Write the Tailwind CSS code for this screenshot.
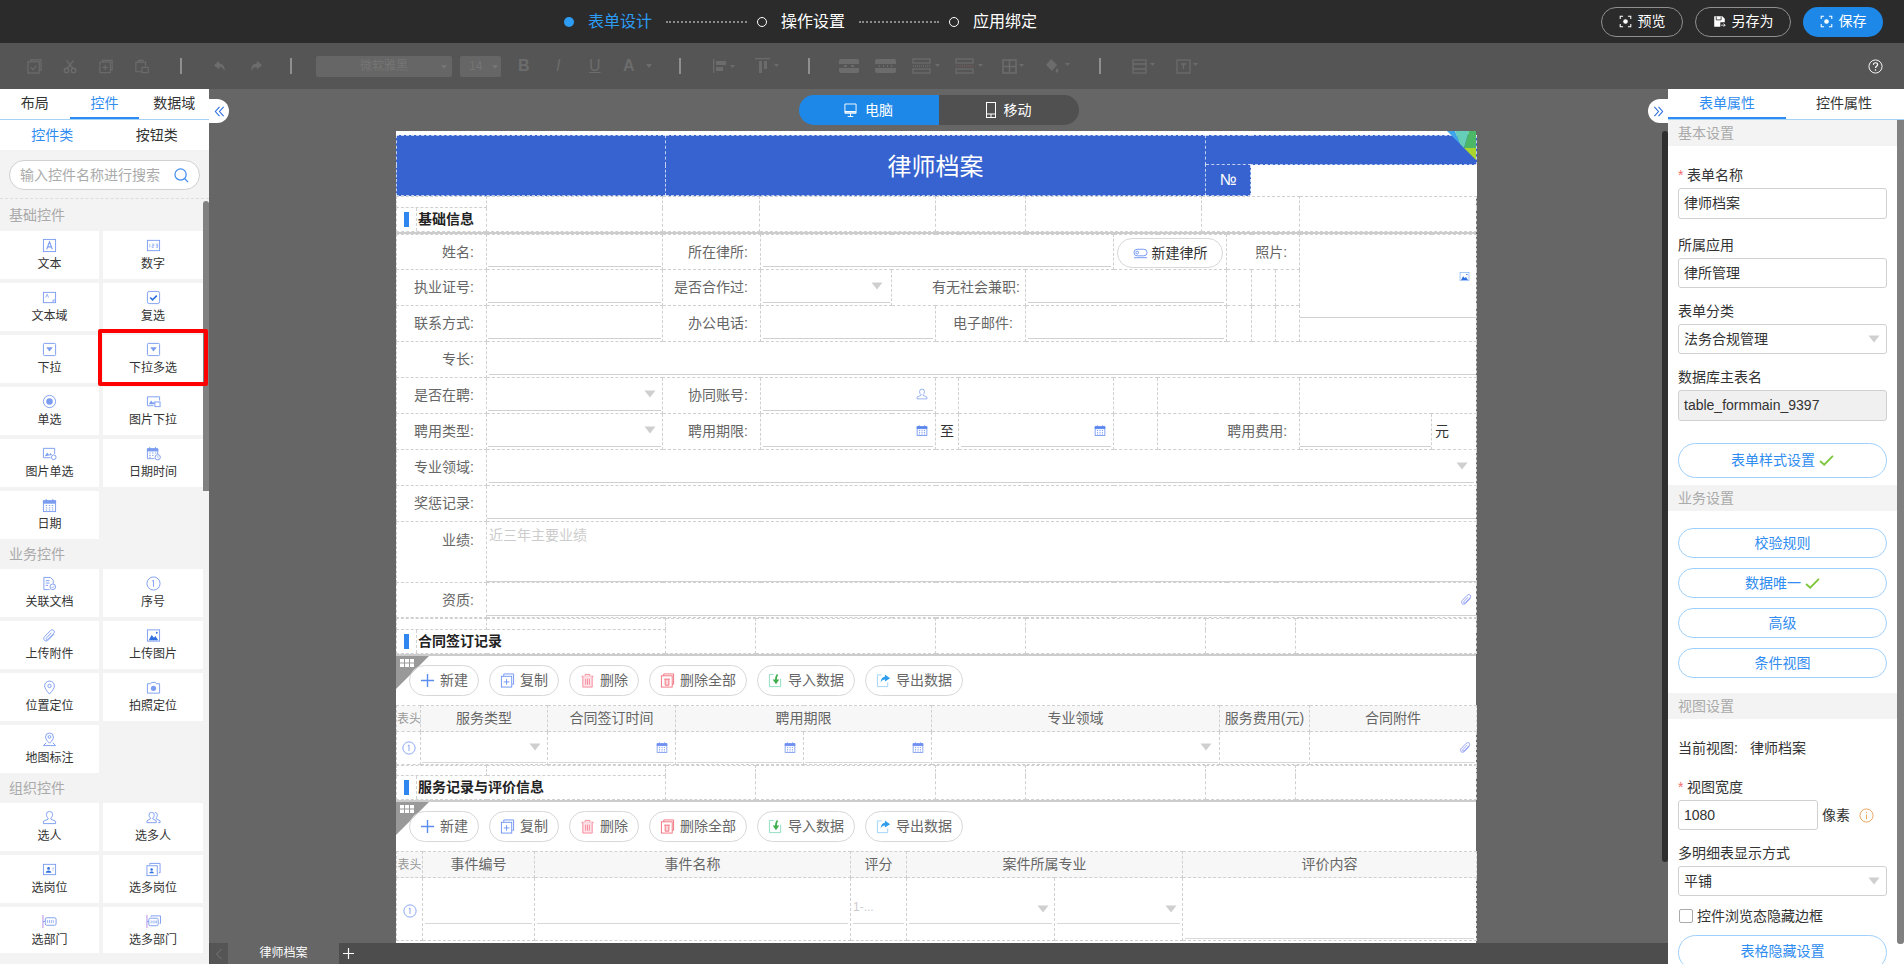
<!DOCTYPE html>
<html lang="zh-CN">
<head>
  <meta charset="UTF-8" />
  <title>律师档案 - 表单设计</title>
  <script src="https://cdn.jsdelivr.net/npm/@tailwindcss/browser@4"></script>
</head>
<body class="w-[1904px] h-[964px] overflow-hidden bg-[#666666] font-['Liberation_Sans','Noto_Sans_CJK_SC',sans-serif] text-[14px] text-[#333333]">

  <!-- icon sprite -->
  <svg class="hidden" xmlns="http://www.w3.org/2000/svg">
    <symbol id="i-text" viewBox="0 0 16 16"><rect x="1.5" y="1.5" width="13" height="13" fill="none" stroke="currentColor"/><path d="M5 12 8 4l3 8M6 9.5h4" fill="none" stroke="currentColor" stroke-width="1.2"/></symbol>
    <symbol id="i-num" viewBox="0 0 16 16"><rect x="1.5" y="2.5" width="13" height="11" fill="none" stroke="currentColor"/><path d="M4 6.5v3.5M6.5 6.5h2v1.7h-2V10h2M10.5 6.5h2v3.5h-2M10.5 8.2h2" fill="none" stroke="currentColor" stroke-width=".7"/></symbol>
    <symbol id="i-area" viewBox="0 0 16 16"><rect x="1.5" y="2.5" width="13" height="11" fill="none" stroke="currentColor"/><path d="M4 8l1.5-3.5L7 8M11 12l2-2v2z" fill="none" stroke="currentColor" stroke-width=".8"/></symbol>
    <symbol id="i-check" viewBox="0 0 16 16"><rect x="1.5" y="1.5" width="13" height="13" rx="2" fill="none" stroke="currentColor"/><path d="M4.5 8l2.5 2.5 4.500-4.500" fill="none" stroke="#2f6fe0" stroke-width="1.800"/></symbol>
    <symbol id="i-drop" viewBox="0 0 16 16"><rect x="1.5" y="1.5" width="13" height="13" rx="1" fill="none" stroke="currentColor"/><path d="M4.500 5.500h7L8 10z" fill="currentColor"/></symbol>
    <symbol id="i-radio" viewBox="0 0 16 16"><circle cx="8" cy="8" r="6.500" fill="none" stroke="currentColor"/><circle cx="8" cy="8" r="3.500" fill="currentColor"/></symbol>
    <symbol id="i-imgdrop" viewBox="0 0 16 16"><path d="M11 3H1.500v9.500H8" fill="none" stroke="currentColor"/><path d="M3 11l2.500-4 2 2.500 1.500-2v3.500z" fill="currentColor"/><rect x="9.500" y="8.500" width="5.500" height="5" fill="none" stroke="currentColor"/><path d="M10.500 3H14.500v4" fill="none" stroke="currentColor"/></symbol>
    <symbol id="i-imgradio" viewBox="0 0 16 16"><path d="M9 12.500H1.500v-10h12v6" fill="none" stroke="currentColor"/><path d="M3 11l2.500-4 2 2.500 1.500-2 1.500 2z" fill="currentColor"/><circle cx="12.500" cy="12" r="2.500" fill="none" stroke="currentColor"/></symbol>
    <symbol id="i-date" viewBox="0 0 16 16"><rect x="1.500" y="3" width="13" height="11.500" fill="none" stroke="currentColor"/><path d="M1.500 3h13v2.500h-13zM4.500 1v3M11.500 1v3" fill="currentColor" stroke="currentColor"/><path d="M4 8h1.500M7.300 8h1.500M10.500 8H12M4 10.500h1.500M7.300 10.500h1.500M10.500 10.500H12M4 12.800h1.500M7.300 12.800h1.500M10.500 12.800H12" stroke="currentColor"/></symbol>
    <symbol id="i-datetime" viewBox="0 0 16 16"><path d="M9 13.500H1.500V3h11v6" fill="none" stroke="currentColor"/><path d="M1.500 3h11v2.300h-11zM4 1v3M10 1v3" fill="currentColor" stroke="currentColor"/><path d="M3.500 7.500h1.500M6.500 7.500H8M9.500 7.500H11M3.500 10h1.500M6.500 10H8M3.500 12h1.500" stroke="currentColor"/><circle cx="12.500" cy="12" r="2.800" fill="#fff" stroke="currentColor"/><path d="M12.500 10.500V12l1 .8" fill="none" stroke="currentColor" stroke-width=".7"/></symbol>
    <symbol id="i-doc" viewBox="0 0 16 16"><path d="M8 14.500H2V1.500h7l3 3v3.500" fill="none" stroke="currentColor"/><path d="M4 5h4M4 7.500h4M4 10h2.500" stroke="currentColor"/><circle cx="11.500" cy="11.500" r="3" fill="none" stroke="currentColor"/><path d="M10 11.500l1.200 1.200 2-2" fill="none" stroke="currentColor" stroke-width=".8"/></symbol>
    <symbol id="i-seq" viewBox="0 0 16 16"><circle cx="8" cy="8" r="7" fill="none" stroke="currentColor"/><path d="M6.500 5.500 8 4.500V11.500" fill="none" stroke="currentColor"/></symbol>
    <symbol id="i-clip" viewBox="0 0 16 16"><path d="M12.800 6.500 7 12.600c-1.500 1.500-3.700 1.500-4.500.5-.9-1-.8-2.700.4-4l6-6.300c1-1 2.500-1.200 3.500-.3 1 .9.9 2.400 0 3.400l-5.800 6.100c-.6.600-1.400.6-1.800.2-.5-.5-.4-1.200.2-1.800l5-5.300" fill="none" stroke="currentColor"/></symbol>
    <symbol id="i-image" viewBox="0 0 16 16"><rect x="1.500" y="2" width="13" height="12" fill="none" stroke="currentColor"/><path d="M3 13l3-5.500 2.500 3 1.500-2 3 4.500z" fill="#2f6fe0"/><circle cx="11.500" cy="5" r="1" fill="#2f6fe0"/></symbol>
    <symbol id="i-pin" viewBox="0 0 16 16"><path d="M8 15C5 11.500 2.800 9 2.800 6.300a5.200 5.200 0 0 1 10.400 0C13.200 9 11 11.500 8 15z" fill="none" stroke="currentColor"/><circle cx="8" cy="6.300" r="1.800" fill="none" stroke="currentColor"/></symbol>
    <symbol id="i-camera" viewBox="0 0 16 16"><path d="M1.500 4h3.500l1-1.500h4L11 4h3.500v10h-13z" fill="none" stroke="currentColor"/><circle cx="8" cy="8.800" r="2.800" fill="currentColor"/></symbol>
    <symbol id="i-mappin" viewBox="0 0 16 16"><path d="M8 12C5.500 9.500 3.800 7.500 3.800 5.300a4.200 4.200 0 0 1 8.400 0C12.200 7.500 10.500 9.500 8 12z" fill="none" stroke="currentColor"/><circle cx="8" cy="5.300" r="1.500" fill="none" stroke="currentColor"/><path d="M4.500 11.500 1.500 14.500h13l-3-3" fill="none" stroke="currentColor"/></symbol>
    <symbol id="i-user" viewBox="0 0 16 16"><path d="M8 1.500a3.300 3.300 0 0 1 3.300 3.500c0 1.500-.8 2.900-1.800 3.500v1.300L14.500 12v2.500h-13V12l5-2.200V8.500C5.500 7.900 4.700 6.500 4.700 5A3.300 3.300 0 0 1 8 1.500z" fill="none" stroke="currentColor"/></symbol>
    <symbol id="i-users" viewBox="0 0 16 16"><path d="M6 2.500a2.800 2.800 0 0 1 2.800 3c0 1.300-.7 2.400-1.500 3v1l3.700 2v2H1v-2l3.700-2v-1C3.900 7.900 3.200 6.800 3.200 5.500A2.800 2.800 0 0 1 6 2.500zM9.500 2.500c1.500 0 2.600 1.300 2.600 3 0 1.200-.6 2.300-1.300 2.800v1l4.200 2.200v2H13" fill="none" stroke="currentColor"/></symbol>
    <symbol id="i-post" viewBox="0 0 16 16"><rect x="1.500" y="2.500" width="13" height="11" fill="none" stroke="currentColor"/><circle cx="7" cy="6.800" r="1.500" fill="#2f6fe0"/><path d="M4 11.500c.4-1.800 1.500-2.500 3-2.500s2.600.7 3 2.500z" fill="#2f6fe0"/><path d="M11 6.500h2M11 8.500h1.500" stroke="currentColor" stroke-width=".7"/></symbol>
    <symbol id="i-posts" viewBox="0 0 16 16"><rect x="1" y="4" width="11" height="10.500" fill="none" stroke="currentColor"/><path d="M4 3V1.500h11V11.500h-1.500" fill="none" stroke="currentColor"/><circle cx="6" cy="8" r="1.300" fill="#2f6fe0"/><path d="M3.500 12c.4-1.500 1.300-2 2.500-2s2.100.5 2.500 2z" fill="#2f6fe0"/></symbol>
    <symbol id="i-dept" viewBox="0 0 16 16"><path d="M1 1v14" stroke="#b08ae8"/><path d="M1 8h2" stroke="currentColor"/><rect x="3.500" y="4" width="11.500" height="8" rx="1.500" fill="none" stroke="currentColor"/><path d="M6 6.500v3M8 6.500v3M10 6.500v3M12 6.500v3" stroke="currentColor" stroke-width=".8"/></symbol>
    <symbol id="i-depts" viewBox="0 0 16 16"><path d="M1 1v14" stroke="#b08ae8"/><path d="M1 8h2" stroke="currentColor"/><rect x="3" y="4.500" width="10" height="8" rx="1.500" fill="none" stroke="currentColor"/><path d="M5.500 3V2h10v8h-1" fill="none" stroke="currentColor"/><path d="M5.500 7v3M7.500 7v3M9.500 7v3M11 7v3" stroke="currentColor" stroke-width=".8"/></symbol>
    <symbol id="i-arrow" viewBox="0 0 12 8"><path d="M.5.500h11L6 7.500z" fill="#cfcfcf"/></symbol>
    <symbol id="i-ok" viewBox="0 0 16 12"><path d="M1 6.500 5.500 10.500 15 1" fill="none" stroke="#7cc63b" stroke-width="2"/></symbol>
    <symbol id="i-plus" viewBox="0 0 16 16"><path d="M8 1v14M1 8h14" stroke="#5b8def" stroke-width="1.500"/></symbol>
    <symbol id="i-copy" viewBox="0 0 16 16"><rect x="1.500" y="3.500" width="11" height="11.500" fill="none" stroke="#6f94f3"/><path d="M4 3V1h10.500v11H13" fill="none" stroke="#6f94f3"/><path d="M7 6.500v6M4 9.500h6" stroke="#6f94f3"/></symbol>
    <symbol id="i-trash" viewBox="0 0 16 16"><path d="M1.500 3.500h13M5.500 3V1.500h5V3" fill="none" stroke="#f58a9b"/><path d="M3 3.500V15h10V3.500" fill="#fde3e7" stroke="#f58a9b"/><path d="M6 6v6.500M8 6v6.500M10 6v6.500" stroke="#f58a9b"/></symbol>
    <symbol id="i-trashall" viewBox="0 0 16 16"><rect x="1.500" y="3" width="11.500" height="12" fill="#fff" stroke="#f2727f"/><path d="M4 3V1h10.500v11H13" fill="none" stroke="#f2727f"/><path d="M4.500 6.500h6M5.500 6.500V13h4V6.500" fill="#fbd5da" stroke="#f2727f"/></symbol>
    <symbol id="i-import" viewBox="0 0 16 16"><path d="M6 1.500H1.500v13h12V6" fill="none" stroke="#8edcc0"/><path d="M9.500 1C8 3 7.500 5 7.500 7H5l3.500 5L12 7H9.500c0-2 .5-4 1.500-5z" fill="#3fae4f"/></symbol>
    <symbol id="i-export" viewBox="0 0 16 16"><path d="M6 2H1.500v12.500h11V10" fill="none" stroke="#9fd2f8"/><path d="M9.500 1.500 15 5.500 9.500 9V7C7.500 7 6 8 5 10c0-3.500 1.800-5.700 4.500-6z" fill="#2d9df0"/></symbol>
    <symbol id="i-preview" viewBox="0 0 16 16"><path d="M1.500 5V1.500H5M11 1.500h3.500V5M14.500 11v3.500H11M5 14.500H1.500V11" fill="none" stroke="currentColor" stroke-width="1.300"/><circle cx="8" cy="8" r="2.800" fill="currentColor"/></symbol>
  </svg>

  <!-- top bar -->
  <header class="h-[43px] bg-[#2b2b2b] flex items-center pl-[564px] pr-[21px]">
    <span class="w-[10px] h-[10px] rounded-full bg-[#2d9cf4]"></span>
    <span class="ml-[14px] text-[16px] text-[#2d9cf4]">表单设计</span>
    <span class="ml-[14px] w-[81px] border-t-2 border-dotted border-[#8a8a8a]"></span>
    <span class="ml-[10px] w-[10px] h-[10px] rounded-full border border-white"></span>
    <span class="ml-[14px] text-[16px] text-white">操作设置</span>
    <span class="ml-[14px] w-[80px] border-t-2 border-dotted border-[#8a8a8a]"></span>
    <span class="ml-[10px] w-[10px] h-[10px] rounded-full border border-white"></span>
    <span class="ml-[14px] text-[16px] text-white">应用绑定</span>
    <div class="ml-auto flex gap-[12px]">
      <button class="w-[82px] h-[30px] rounded-full border border-[#8f8f8f] flex items-center justify-center gap-[6px] text-white">
        <svg class="w-[13px] h-[13px]"><use href="#i-preview"/></svg>预览
      </button>
      <button class="w-[96px] h-[30px] rounded-full border border-[#8f8f8f] flex items-center justify-center gap-[6px] text-white">
        <svg class="w-[13px] h-[13px]" viewBox="0 0 16 16"><path d="M1.500 1.500h10l3 3V9H9v5.500H1.500z" fill="#fff"/><path d="M4 2v4h6V2" fill="none" stroke="#2b2b2b"/><path d="M10 12.500h5M13 10.500l2 2-2 2" fill="none" stroke="#fff"/></svg>另存为
      </button>
      <button class="w-[80px] h-[30px] rounded-full bg-[#1e88e8] flex items-center justify-center gap-[6px] text-white">
        <svg class="w-[13px] h-[13px]"><use href="#i-preview"/></svg>保存
      </button>
    </div>
  </header>

  <!-- toolbar, everything greyed out -->
  <div class="h-[46px] bg-[#555555] flex items-center text-[#6c6c6c]">
    <svg class="ml-[27px] w-[15px] h-[15px] shrink-0" viewBox="0 0 16 16" fill="none" stroke="currentColor" stroke-width="1.300"><rect x="1" y="3" width="12" height="12"/><path d="M4 3V1h11v11h-2M4 9l2.500 2.500L10 7"/></svg>
    <svg class="ml-[21px] w-[14px] h-[15px] shrink-0" viewBox="0 0 16 16" fill="none" stroke="currentColor" stroke-width="1.500"><circle cx="4" cy="12.500" r="2.500"/><circle cx="12" cy="12.500" r="2.500"/><path d="M5 10 12 1M11 10 4 1"/></svg>
    <svg class="ml-[22px] w-[14px] h-[15px] shrink-0" viewBox="0 0 16 16" fill="none" stroke="currentColor" stroke-width="1.300"><rect x="1" y="3" width="12" height="12"/><path d="M4 3V1h11v11h-2M7 6v6M4 9h6"/></svg>
    <svg class="ml-[22px] w-[14px] h-[15px] shrink-0" viewBox="0 0 16 16" fill="none" stroke="currentColor" stroke-width="1.300"><path d="M7 14H1V3h11v5"/><path d="M4 3V1h5v2"/><rect x="8" y="9" width="7" height="6"/></svg>
    <span class="ml-[31px] w-[2px] h-[16px] bg-[#8f8f8f] shrink-0"></span>
    <svg class="ml-[31px] w-[14px] h-[14px] shrink-0" viewBox="0 0 16 16" fill="currentColor"><path d="M7 2 1 7l6 5V9c3 0 5 1 6 5 1-5-1-8.500-6-9z"/></svg>
    <svg class="ml-[22px] w-[14px] h-[14px] shrink-0" viewBox="0 0 16 16" fill="currentColor"><path d="M9 2l6 5-6 5V9c-3 0-5 1-6 5-1-5 1-8.500 6-9z"/></svg>
    <span class="ml-[27px] w-[2px] h-[16px] bg-[#8f8f8f] shrink-0"></span>
    <div class="ml-[24px] w-[136px] h-[21px] bg-[#666666] rounded-[2px] relative shrink-0 flex items-center justify-center text-[12px] text-[#757575]">微软雅黑<span class="absolute right-[5px] top-[9px] border-x-[3px] border-t-[4px] border-x-transparent border-t-[#757575]"></span></div>
    <div class="ml-[8px] w-[41px] h-[21px] bg-[#666666] rounded-[2px] relative shrink-0 flex items-center pl-[9px] text-[12px] text-[#757575]">14<span class="absolute right-[3px] top-[9px] border-x-[3px] border-t-[4px] border-x-transparent border-t-[#757575]"></span></div>
    <span class="ml-[17px] w-[12px] text-[16px] font-bold leading-none shrink-0">B</span>
    <span class="ml-[26px] w-[9px] text-[16px] italic leading-none shrink-0">I</span>
    <span class="ml-[24px] w-[14px] text-[16px] underline leading-none shrink-0">U</span>
    <span class="ml-[20px] w-[13px] text-[16px] font-bold leading-none shrink-0">A</span>
    <span class="ml-[10px] border-x-[3px] border-t-[4px] border-x-transparent border-t-[#6c6c6c] shrink-0"></span>
    <span class="ml-[27px] w-[2px] h-[16px] bg-[#8f8f8f] shrink-0"></span>
    <svg class="ml-[31px] w-[23px] h-[14px] shrink-0" viewBox="0 0 23 14" fill="currentColor"><path d="M1 0h1.300v14H1zM4 2h10v4H4zM4 8h7v4H4zM18 6h5l-2.500 3z"/></svg>
    <svg class="ml-[20px] w-[24px] h-[16px] shrink-0" viewBox="0 0 24 16" fill="currentColor"><path d="M0 0h15v1.300H0zM4 3h3v12H4zM9 3h3v8H9zM19 6h5l-2.500 3z"/></svg>
    <span class="ml-[29px] w-[2px] h-[16px] bg-[#8f8f8f] shrink-0"></span>
    <svg class="ml-[29px] w-[20px] h-[14px] shrink-0" viewBox="0 0 20 14" fill="currentColor"><path d="M0 2a2 2 0 0 1 2-2h16a2 2 0 0 1 2 2v3H0zM0 9h20v3a2 2 0 0 1-2 2H2a2 2 0 0 1-2-2zM5 6h3v2H5zM12 6h3v2h-3z"/></svg>
    <svg class="ml-[16px] w-[21px] h-[14px] shrink-0" viewBox="0 0 21 14" fill="currentColor"><path d="M0 2a2 2 0 0 1 2-2h17a2 2 0 0 1 2 2v3H0zM0 9h21v3a2 2 0 0 1-2 2H2a2 2 0 0 1-2-2zM4 6h1v2H4zM8 6h1v2H8zM12 6h1v2h-1zM16 6h1v2h-1z"/></svg>
    <svg class="ml-[16px] w-[29px] h-[16px] shrink-0" viewBox="0 0 29 16" fill="none" stroke="currentColor" stroke-width="1.300"><rect x="1" y="1" width="17" height="4"/><rect x="1" y="11" width="17" height="4"/><path d="M1 8h17" stroke-dasharray="1 1"/><path d="M23 6h5l-2.500 3z" fill="currentColor" stroke="none"/></svg>
    <svg class="ml-[14px] w-[29px] h-[16px] shrink-0" viewBox="0 0 29 16" fill="none" stroke="currentColor" stroke-width="1.300"><rect x="1" y="1" width="17" height="4"/><rect x="1" y="11" width="17" height="4"/><path d="M1 8h17" stroke="#7a5a5a" stroke-dasharray="1 1"/><path d="M23 6h5l-2.500 3z" fill="currentColor" stroke="none"/></svg>
    <svg class="ml-[18px] w-[22px] h-[15px] shrink-0" viewBox="0 0 22 15" fill="none" stroke="currentColor" stroke-width="1.500"><rect x="1" y="1" width="13" height="13"/><path d="M7.500 1v13M1 7.500h13"/><path d="M17 5h5l-2.500 3z" fill="currentColor" stroke="none"/></svg>
    <svg class="ml-[21px] w-[26px] h-[16px] shrink-0" viewBox="0 0 26 16" fill="currentColor"><path d="M6 1l6 6-5 6-6-6z"/><path d="M12 10c1 1.500 1.500 2.300 1.500 3a1.500 1.500 0 0 1-3 0c0-.7.5-1.500 1.500-3zM20 5h5l-2.500 3z"/></svg>
    <span class="ml-[28px] w-[2px] h-[16px] bg-[#8f8f8f] shrink-0"></span>
    <svg class="ml-[31px] w-[23px] h-[15px] shrink-0" viewBox="0 0 23 15" fill="none" stroke="currentColor" stroke-width="1.300"><rect x="1" y="1" width="13" height="13"/><path d="M1 5h13M1 10h13"/><path d="M18 4h5l-2.500 3z" fill="currentColor" stroke="none"/></svg>
    <svg class="ml-[21px] w-[22px] h-[15px] shrink-0" viewBox="0 0 22 15" fill="none" stroke="currentColor" stroke-width="1.300"><rect x="1" y="1" width="13" height="13"/><path d="M5 5h5M7.500 5v5"/><path d="M17 4h5l-2.500 3z" fill="currentColor" stroke="none"/></svg>
    <svg class="ml-auto mr-[21px] w-[15px] h-[15px] shrink-0 text-white" viewBox="0 0 16 16" fill="none" stroke="currentColor"><circle cx="8" cy="8" r="7"/><path d="M5.800 6.200C5.800 4.800 6.800 4 8 4s2.200.8 2.200 2c0 1.700-2.200 1.700-2.200 3.500" stroke-width="1.300"/><path d="M8 11v1.500" stroke-width="1.300"/></svg>
  </div>

  <div class="flex h-[875px]">
    <!-- left: control palette -->
    <aside class="w-[209px] shrink-0 bg-[#f3f3f3] relative overflow-hidden">
      <div class="h-[31px] bg-white grid grid-cols-3 border-b border-[#a5d3f8] text-center leading-[28px]">
        <span>布局</span>
        <span class="text-[#2f8cf0] border-b-2 border-[#2f8cf0] h-[30px]">控件</span>
        <span>数据域</span>
      </div>
      <div class="h-[30px] bg-white grid grid-cols-2 text-center leading-[30px]">
        <span class="text-[#2f8cf0]">控件类</span>
        <span>按钮类</span>
      </div>
      <div class="h-[49px] border-b border-dashed border-[#dddddd] px-[9px] pt-[10px]">
        <div class="h-[30px] bg-white rounded-full border border-[#d0d0d0] flex items-center pl-[10px] pr-[10px] justify-between text-[#aaaaaa]">
          <span>输入控件名称进行搜索</span>
          <svg class="w-[15px] h-[15px]" viewBox="0 0 16 16" fill="none" stroke="#3f8cf0" stroke-width="1.300"><circle cx="7" cy="7" r="6"/><path d="M11.500 11.500 15 15"/></svg>
        </div>
      </div>

      <div class="h-[32px] pl-[9px] pt-[1px] flex items-center text-[#aaaaaa]">基础控件</div>
      <div class="grid grid-cols-[99px_100px] gap-[4px] text-[12px] text-center text-[#333333]">
        <div class="h-[48px] bg-white pt-[7px] flex flex-col items-center text-[#7b9cf0]"><svg class="w-[15px] h-[15px]"><use href="#i-text"/></svg><span class="mt-[2px] leading-[18px] text-[#333333]">文本</span></div>
        <div class="h-[48px] bg-white pt-[7px] flex flex-col items-center text-[#7b9cf0]"><svg class="w-[15px] h-[15px]"><use href="#i-num"/></svg><span class="mt-[2px] leading-[18px] text-[#333333]">数字</span></div>
        <div class="h-[48px] bg-white pt-[7px] flex flex-col items-center text-[#7b9cf0]"><svg class="w-[15px] h-[15px]"><use href="#i-area"/></svg><span class="mt-[2px] leading-[18px] text-[#333333]">文本域</span></div>
        <div class="h-[48px] bg-white pt-[7px] flex flex-col items-center text-[#7b9cf0]"><svg class="w-[15px] h-[15px]"><use href="#i-check"/></svg><span class="mt-[2px] leading-[18px] text-[#333333]">复选</span></div>
        <div class="h-[48px] bg-white pt-[7px] flex flex-col items-center text-[#7b9cf0]"><svg class="w-[15px] h-[15px]"><use href="#i-drop"/></svg><span class="mt-[2px] leading-[18px] text-[#333333]">下拉</span></div>
        <div class="h-[48px] bg-white pt-[7px] flex flex-col items-center text-[#7b9cf0] relative">
          <svg class="w-[15px] h-[15px]"><use href="#i-drop"/></svg><span class="mt-[2px] leading-[18px] text-[#333333]">下拉多选</span>
          <span class="absolute z-10 left-[-5px] top-[-6px] w-[110px] h-[57px] border-[4px] border-[#ff0000] rounded-[2px]"></span>
        </div>
        <div class="h-[48px] bg-white pt-[7px] flex flex-col items-center text-[#7b9cf0]"><svg class="w-[15px] h-[15px]"><use href="#i-radio"/></svg><span class="mt-[2px] leading-[18px] text-[#333333]">单选</span></div>
        <div class="h-[48px] bg-white pt-[7px] flex flex-col items-center text-[#7b9cf0]"><svg class="w-[15px] h-[15px]"><use href="#i-imgdrop"/></svg><span class="mt-[2px] leading-[18px] text-[#333333]">图片下拉</span></div>
        <div class="h-[48px] bg-white pt-[7px] flex flex-col items-center text-[#7b9cf0]"><svg class="w-[15px] h-[15px]"><use href="#i-imgradio"/></svg><span class="mt-[2px] leading-[18px] text-[#333333]">图片单选</span></div>
        <div class="h-[48px] bg-white pt-[7px] flex flex-col items-center text-[#7b9cf0]"><svg class="w-[15px] h-[15px]"><use href="#i-datetime"/></svg><span class="mt-[2px] leading-[18px] text-[#333333]">日期时间</span></div>
        <div class="h-[48px] bg-white pt-[7px] flex flex-col items-center text-[#7b9cf0]"><svg class="w-[15px] h-[15px]"><use href="#i-date"/></svg><span class="mt-[2px] leading-[18px] text-[#333333]">日期</span></div>
      </div>

      <div class="h-[30px] pl-[9px] flex items-center text-[#aaaaaa]">业务控件</div>
      <div class="grid grid-cols-[99px_100px] gap-[4px] text-[12px] text-center">
        <div class="h-[48px] bg-white pt-[7px] flex flex-col items-center text-[#7b9cf0]"><svg class="w-[15px] h-[15px]"><use href="#i-doc"/></svg><span class="mt-[2px] leading-[18px] text-[#333333]">关联文档</span></div>
        <div class="h-[48px] bg-white pt-[7px] flex flex-col items-center text-[#7b9cf0]"><svg class="w-[15px] h-[15px]"><use href="#i-seq"/></svg><span class="mt-[2px] leading-[18px] text-[#333333]">序号</span></div>
        <div class="h-[48px] bg-white pt-[7px] flex flex-col items-center text-[#7b9cf0]"><svg class="w-[15px] h-[15px]"><use href="#i-clip"/></svg><span class="mt-[2px] leading-[18px] text-[#333333]">上传附件</span></div>
        <div class="h-[48px] bg-white pt-[7px] flex flex-col items-center text-[#7b9cf0]"><svg class="w-[15px] h-[15px]"><use href="#i-image"/></svg><span class="mt-[2px] leading-[18px] text-[#333333]">上传图片</span></div>
        <div class="h-[48px] bg-white pt-[7px] flex flex-col items-center text-[#7b9cf0]"><svg class="w-[15px] h-[15px]"><use href="#i-pin"/></svg><span class="mt-[2px] leading-[18px] text-[#333333]">位置定位</span></div>
        <div class="h-[48px] bg-white pt-[7px] flex flex-col items-center text-[#7b9cf0]"><svg class="w-[15px] h-[15px]"><use href="#i-camera"/></svg><span class="mt-[2px] leading-[18px] text-[#333333]">拍照定位</span></div>
        <div class="h-[48px] bg-white pt-[7px] flex flex-col items-center text-[#7b9cf0]"><svg class="w-[15px] h-[15px]"><use href="#i-mappin"/></svg><span class="mt-[2px] leading-[18px] text-[#333333]">地图标注</span></div>
      </div>

      <div class="h-[30px] pl-[9px] flex items-center text-[#aaaaaa]">组织控件</div>
      <div class="grid grid-cols-[99px_100px] gap-[4px] text-[12px] text-center">
        <div class="h-[48px] bg-white pt-[7px] flex flex-col items-center text-[#7b9cf0]"><svg class="w-[15px] h-[15px]"><use href="#i-user"/></svg><span class="mt-[2px] leading-[18px] text-[#333333]">选人</span></div>
        <div class="h-[48px] bg-white pt-[7px] flex flex-col items-center text-[#7b9cf0]"><svg class="w-[15px] h-[15px]"><use href="#i-users"/></svg><span class="mt-[2px] leading-[18px] text-[#333333]">选多人</span></div>
        <div class="h-[48px] bg-white pt-[7px] flex flex-col items-center text-[#7b9cf0]"><svg class="w-[15px] h-[15px]"><use href="#i-post"/></svg><span class="mt-[2px] leading-[18px] text-[#333333]">选岗位</span></div>
        <div class="h-[48px] bg-white pt-[7px] flex flex-col items-center text-[#7b9cf0]"><svg class="w-[15px] h-[15px]"><use href="#i-posts"/></svg><span class="mt-[2px] leading-[18px] text-[#333333]">选多岗位</span></div>
        <div class="h-[46px] bg-white pt-[7px] flex flex-col items-center text-[#7b9cf0]"><svg class="w-[15px] h-[15px]"><use href="#i-dept"/></svg><span class="mt-[2px] leading-[18px] text-[#333333]">选部门</span></div>
        <div class="h-[46px] bg-white pt-[7px] flex flex-col items-center text-[#7b9cf0]"><svg class="w-[15px] h-[15px]"><use href="#i-depts"/></svg><span class="mt-[2px] leading-[18px] text-[#333333]">选多部门</span></div>
      </div>
      <!-- scrollbar thumb -->
      <span class="absolute left-[203px] top-[112px] w-[6px] h-[290px] bg-[#808080] rounded-t-[3px]"></span>
    </aside>

    <!-- centre: canvas -->
    <main class="w-[1459px] shrink-0 flex flex-col relative">
      <button class="absolute left-0 top-[10px] w-[20px] h-[24px] bg-white rounded-r-full flex items-center justify-center">
        <svg class="w-[11px] h-[11px]" viewBox="0 0 12 12" fill="none" stroke="#2f6fe0" stroke-width="1.200"><path d="M6 1 1.500 6 6 11M10.500 1 6 6l4.500 5"/></svg>
      </button>
      <button class="absolute right-0 top-[10px] w-[20px] h-[24px] bg-white rounded-l-full flex items-center justify-center">
        <svg class="w-[11px] h-[11px]" viewBox="0 0 12 12" fill="none" stroke="#2f6fe0" stroke-width="1.200"><path d="M1.500 1 6 6l-4.500 5M6 1l4.500 5L6 11"/></svg>
      </button>
      <span class="absolute right-0 top-[42px] w-[6px] h-[731px] bg-[#2f2f2f] rounded-[3px]"></span>

      <div class="h-[42px] shrink-0 flex justify-center pt-[6px]">
        <div class="w-[280px] h-[30px] flex rounded-full overflow-hidden text-white">
          <div class="w-[140px] bg-[#1e88e8] flex items-center justify-center gap-[8px]">
            <svg class="w-[13px] h-[15px]" viewBox="0 0 14 16" fill="none" stroke="#fff"><path d="M1 1h12v10H1z"/><path d="M1 9.500h12" stroke-width="2"/><path d="M7 11v3M4 14.500h6"/></svg>电脑
          </div>
          <div class="w-[140px] bg-[#505050] flex items-center justify-center gap-[8px]">
            <svg class="w-[10px] h-[16px]" viewBox="0 0 10 16" fill="none" stroke="#fff"><rect x=".5" y=".5" width="9" height="15"/><path d="M.5 12h9"/><path d="M5 12v3.500"/></svg>移动
          </div>
        </div>
      </div>

      <div class="flex-1 overflow-hidden pl-[187px]">
        <div class="w-[1080px] bg-white relative min-h-full">
          <!-- coloured corner -->
          <svg class="absolute z-10 right-0 top-0 w-[29px] h-[29px]" viewBox="0 0 29 29"><path d="M0 0h8l5 13z" fill="#3fa4ea"/><path d="M8 0h14l-5 17-4-4z" fill="#66cdb9"/><path d="M22 0h7v17H17z" fill="#4db768"/><path d="M17 17h12v12z" fill="#a9d52e"/></svg>

          <div class="h-[4px]"></div>
          <!-- title band -->
          <table class="w-[1080px] table-fixed bg-[#3663cf] [&_td]:border [&_td]:border-dashed [&_td]:border-white/70">
            <colgroup><col class="w-[269px]"><col class="w-[540px]"><col class="w-[45px]"><col class="w-[226px]"></colgroup>
            <tr class="h-[29px]">
              <td rowspan="2"></td>
              <td rowspan="2" class="text-center text-[24px] text-white pt-[2px]">律师档案</td>
              <td colspan="2"></td>
            </tr>
            <tr class="h-[31px]">
              <td class="text-center text-[16px] text-white">№</td>
              <td class="bg-white"></td>
            </tr>
          </table>

          <!-- 基础信息 -->
          <div class="border-b-2 border-[#cccccc]">
            <table class="w-[1080px] table-fixed [&_td]:border [&_td]:border-dashed [&_td]:border-[#d0d0d0]">
              <colgroup><col class="w-[90px]"><col class="w-[176px]"><col class="w-[97px]"><col class="w-[176px]"><col class="w-[90px]"><col class="w-[176px]"><col class="w-[98px]"><col class="w-[177px]"></colgroup>
              <tr class="h-[11px]"><td></td><td rowspan="2"></td><td rowspan="2"></td><td rowspan="2"></td><td rowspan="2"></td><td rowspan="2"></td><td rowspan="2"></td><td rowspan="2"></td></tr>
              <tr class="h-[23px]"><td><div class="flex items-center h-[23px]"><span class="ml-[7px] w-[5px] h-[15px] bg-[#2f86ee]"></span><span class="ml-[7px] pl-[1px] h-[23px] leading-[23px] border-l border-dashed border-[#d0d0d0] font-bold text-[#222222] whitespace-nowrap">基础信息</span></div></td></tr>
            </table>
          </div>

          <table class="w-[1080px] table-fixed text-[#666666] [&_td]:border [&_td]:border-dashed [&_td]:border-[#d0d0d0]">
            <colgroup><col class="w-[90px]"><col class="w-[176px]"><col class="w-[98px]"><col class="w-[131px]"><col class="w-[44px]"><col class="w-[23px]"><col class="w-[67px]"><col class="w-[88px]"><col class="w-[44px]"><col class="w-[69px]"><col class="w-[25px]"><col class="w-[24px]"><col class="w-[24px]"><col class="w-[132px]"><col class="w-[45px]"></colgroup>
            <tr class="h-[35px]">
              <td class="text-right pr-[12px]">姓名:</td>
              <td class="align-top"><div class="h-[32px] mx-[1px] border-b border-[#d0d0d0]"></div></td>
              <td class="text-right pr-[12px]">所在律所:</td>
              <td colspan="5" class="align-top"><div class="h-[32px] ml-[2px] mr-[2px] border-b border-[#d0d0d0]"></div></td>
              <td colspan="2" class="align-top"><div class="mt-[3px] mx-[3px] h-[30px] rounded-full border border-[#d8d8d8] flex items-center justify-center gap-[4px] text-[#333333]"><svg class="w-[15px] h-[12px]" viewBox="0 0 16 12" fill="none" stroke="#6f94f3"><rect x="1" y="2" width="14" height="7" rx="3.500"/><circle cx="4.500" cy="5.500" r="1.500"/><path d="M1 11h14"/></svg>新建律所</div></td>
              <td colspan="3" class="text-right pr-[12px]">照片:</td>
              <td colspan="2" rowspan="3" class="align-top"><div class="h-[83px] border-b border-[#d0d0d0] flex items-center justify-end pr-[5px]"><svg class="w-[13px] h-[11px] text-[#7eaef5]"><use href="#i-image"/></svg></div></td>
            </tr>
            <tr class="h-[36px]">
              <td class="text-right pr-[12px]">执业证号:</td>
              <td class="align-top"><div class="h-[33px] mx-[1px] border-b border-[#d0d0d0]"></div></td>
              <td class="text-right pr-[12px]">是否合作过:</td>
              <td class="align-top"><div class="h-[33px] ml-[2px] mr-[1px] border-b border-[#d0d0d0] flex items-center justify-end pr-[7px]"><svg class="w-[12px] h-[8px]"><use href="#i-arrow"/></svg></div></td>
              <td colspan="3" class="text-right pr-[5px]">有无社会兼职:</td>
              <td colspan="3" class="align-top"><div class="h-[33px] mx-[2px] border-b border-[#d0d0d0]"></div></td>
              <td></td><td></td><td></td>
            </tr>
            <tr class="h-[36px]">
              <td class="text-right pr-[12px]">联系方式:</td>
              <td class="align-top"><div class="h-[33px] mx-[1px] border-b border-[#d0d0d0]"></div></td>
              <td class="text-right pr-[12px]">办公电话:</td>
              <td colspan="2" class="align-top"><div class="h-[33px] mx-[2px] border-b border-[#d0d0d0]"></div></td>
              <td colspan="2" class="text-right pr-[12px]">电子邮件:</td>
              <td colspan="3" class="align-top"><div class="h-[33px] mx-[2px] border-b border-[#d0d0d0]"></div></td>
              <td></td><td></td><td></td>
            </tr>
            <tr class="h-[36px]">
              <td class="text-right pr-[12px]">专长:</td>
              <td colspan="14" class="align-top"><div class="h-[33px] ml-[2px] border-b border-[#d0d0d0]"></div></td>
            </tr>
            <tr class="h-[36px]">
              <td class="text-right pr-[12px]">是否在聘:</td>
              <td class="align-top"><div class="h-[33px] mx-[1px] border-b border-[#d0d0d0] flex items-center justify-end pr-[5px]"><svg class="w-[12px] h-[8px]"><use href="#i-arrow"/></svg></div></td>
              <td class="text-right pr-[12px]">协同账号:</td>
              <td colspan="2" class="align-top"><div class="h-[33px] ml-[2px] mr-[2px] border-b border-[#d0d0d0] flex items-center justify-end pr-[5px] text-[#7b9cf0]"><svg class="w-[12px] h-[12px]"><use href="#i-user"/></svg></div></td>
              <td></td>
              <td colspan="2"></td>
              <td></td>
              <td colspan="4"></td>
              <td colspan="2"></td>
            </tr>
            <tr class="h-[36px]">
              <td class="text-right pr-[12px]">聘用类型:</td>
              <td class="align-top"><div class="h-[33px] mx-[1px] border-b border-[#d0d0d0] flex items-center justify-end pr-[5px]"><svg class="w-[12px] h-[8px]"><use href="#i-arrow"/></svg></div></td>
              <td class="text-right pr-[12px]">聘用期限:</td>
              <td colspan="2" class="align-top"><div class="h-[33px] ml-[2px] mr-[2px] border-b border-[#d0d0d0] flex items-center justify-end pr-[5px] text-[#5b86ee]"><svg class="w-[12px] h-[13px]"><use href="#i-date"/></svg></div></td>
              <td class="text-center text-[#333333]">至</td>
              <td colspan="2" class="align-top"><div class="h-[33px] mx-[2px] border-b border-[#d0d0d0] flex items-center justify-end pr-[5px] text-[#5b86ee]"><svg class="w-[12px] h-[13px]"><use href="#i-date"/></svg></div></td>
              <td></td>
              <td colspan="4" class="text-right pr-[12px]">聘用费用:</td>
              <td class="align-top"><div class="h-[33px] border-b border-[#d0d0d0]"></div></td>
              <td class="pl-[3px] text-[#333333]">元</td>
            </tr>
            <tr class="h-[36px]">
              <td class="text-right pr-[12px]">专业领域:</td>
              <td colspan="14" class="align-top"><div class="h-[33px] ml-[2px] mr-[2px] border-b border-[#d0d0d0] flex items-center justify-end pr-[6px]"><svg class="w-[12px] h-[8px]"><use href="#i-arrow"/></svg></div></td>
            </tr>
            <tr class="h-[36px]">
              <td class="text-right pr-[12px]">奖惩记录:</td>
              <td colspan="14" class="align-top"><div class="h-[33px] border-b border-[#d0d0d0]"></div></td>
            </tr>
            <tr class="h-[61px]">
              <td class="text-right pr-[12px] align-top pt-[8px]">业绩:</td>
              <td colspan="14" class="align-top"><div class="h-[60px] border-b border-[#d0d0d0] pl-[2px] pt-[3px] text-[#cccccc]">近三年主要业绩</div></td>
            </tr>
            <tr class="h-[35px]">
              <td class="text-right pr-[12px]">资质:</td>
              <td colspan="14" class="align-top"><div class="h-[33px] border-b border-[#d0d0d0] flex items-center justify-end pr-[3px] text-[#7b8cf0]"><svg class="w-[13px] h-[13px]"><use href="#i-clip"/></svg></div></td>
            </tr>
          </table>

          <!-- 合同签订记录 -->
          <div class="border-b-2 border-[#cccccc]">
            <table class="w-[1080px] table-fixed [&_td]:border [&_td]:border-dashed [&_td]:border-[#d0d0d0]">
              <colgroup><col class="w-[90px]"><col class="w-[179px]"><col class="w-[90px]"><col class="w-[180px]"><col class="w-[90px]"><col class="w-[180px]"><col class="w-[90px]"><col class="w-[181px]"></colgroup>
              <tr class="h-[11px]"><td></td><td></td><td rowspan="2"></td><td rowspan="2"></td><td rowspan="2"></td><td rowspan="2"></td><td rowspan="2"></td><td rowspan="2"></td></tr>
              <tr class="h-[23px]"><td colspan="2"><div class="flex items-center h-[23px]"><span class="ml-[7px] w-[5px] h-[15px] bg-[#2f86ee]"></span><span class="ml-[7px] pl-[1px] h-[23px] leading-[23px] border-l border-dashed border-[#d0d0d0] font-bold text-[#222222] whitespace-nowrap">合同签订记录</span></div></td></tr>
            </table>
          </div>
          <div class="relative h-[49px] flex items-center pl-[13px] gap-[10px] pb-[1px] text-[#666666]">
            <div class="absolute left-0 top-0 w-[33px] h-[33px] bg-[#999999] [clip-path:polygon(0_0,100%_0,0_100%)]"></div>
            <svg class="absolute left-[3px] top-[2px] w-[16px] h-[10px]" viewBox="0 0 16 10" fill="#fff"><path d="M0 0h16v10H0z" fill="#999"/><path d="M1 1h4v3.500H1zM6 1h4v3.500H6zM11 1h4v3.500h-4zM1 5.500h4V9H1zM6 5.500h4V9H6zM11 5.500h4V9h-4z"/></svg>
            <div class="relative w-[70px] h-[31px] rounded-full border border-[#d8d8d8] flex items-center justify-center gap-[5px]"><svg class="w-[15px] h-[15px]"><use href="#i-plus"/></svg>新建</div>
            <div class="w-[70px] h-[31px] rounded-full border border-[#d8d8d8] flex items-center justify-center gap-[5px]"><svg class="w-[15px] h-[15px]"><use href="#i-copy"/></svg>复制</div>
            <div class="w-[70px] h-[31px] rounded-full border border-[#d8d8d8] flex items-center justify-center gap-[5px]"><svg class="w-[15px] h-[15px]"><use href="#i-trash"/></svg>删除</div>
            <div class="w-[98px] h-[31px] rounded-full border border-[#d8d8d8] flex items-center justify-center gap-[5px]"><svg class="w-[15px] h-[15px]"><use href="#i-trashall"/></svg>删除全部</div>
            <div class="w-[98px] h-[31px] rounded-full border border-[#d8d8d8] flex items-center justify-center gap-[5px]"><svg class="w-[15px] h-[15px]"><use href="#i-import"/></svg>导入数据</div>
            <div class="w-[98px] h-[31px] rounded-full border border-[#d8d8d8] flex items-center justify-center gap-[5px]"><svg class="w-[15px] h-[15px]"><use href="#i-export"/></svg>导出数据</div>
          </div>
          <table class="w-[1080px] table-fixed text-[#666666] [&_td]:border [&_td]:border-dashed [&_td]:border-[#d0d0d0]">
            <colgroup><col class="w-[24px]"><col class="w-[127px]"><col class="w-[128px]"><col class="w-[128px]"><col class="w-[128px]"><col class="w-[288px]"><col class="w-[90px]"><col class="w-[167px]"></colgroup>
            <tr class="h-[26px] bg-[#f7f7f7] text-center">
              <td class="whitespace-nowrap text-[12px] text-[#999999]">表头</td>
              <td>服务类型</td>
              <td>合同签订时间</td>
              <td colspan="2">聘用期限</td>
              <td>专业领域</td>
              <td class="whitespace-nowrap">服务费用(元)</td>
              <td>合同附件</td>
            </tr>
            <tr class="h-[33px]">
              <td><svg class="mx-auto w-[14px] h-[14px] text-[#7b9cf0]"><use href="#i-seq"/></svg></td>
              <td class="align-top"><div class="h-[31px] mx-[1px] border-b border-[#d8d8d8] flex items-center justify-end pr-[5px]"><svg class="w-[12px] h-[8px]"><use href="#i-arrow"/></svg></div></td>
              <td class="align-top"><div class="h-[31px] mx-[1px] border-b border-[#d8d8d8] flex items-center justify-end pr-[6px] text-[#6f8ff0]"><svg class="w-[12px] h-[13px]"><use href="#i-date"/></svg></div></td>
              <td class="align-top"><div class="h-[31px] mx-[1px] border-b border-[#d8d8d8] flex items-center justify-end pr-[6px] text-[#6f8ff0]"><svg class="w-[12px] h-[13px]"><use href="#i-date"/></svg></div></td>
              <td class="align-top"><div class="h-[31px] mx-[1px] border-b border-[#d8d8d8] flex items-center justify-end pr-[6px] text-[#6f8ff0]"><svg class="w-[12px] h-[13px]"><use href="#i-date"/></svg></div></td>
              <td class="align-top"><div class="h-[31px] mx-[1px] border-b border-[#d8d8d8] flex items-center justify-end pr-[6px]"><svg class="w-[12px] h-[8px]"><use href="#i-arrow"/></svg></div></td>
              <td class="align-top"><div class="h-[31px] mx-[1px] border-b border-[#d8d8d8]"></div></td>
              <td class="align-top"><div class="h-[31px] mx-[1px] border-b border-[#d8d8d8] flex items-center justify-end pr-[3px] text-[#7b8cf0]"><svg class="w-[13px] h-[13px]"><use href="#i-clip"/></svg></div></td>
            </tr>
          </table>

          <!-- 服务记录与评价信息 -->
          <div class="border-b-2 border-[#cccccc]">
            <table class="w-[1080px] table-fixed [&_td]:border [&_td]:border-dashed [&_td]:border-[#d0d0d0]">
              <colgroup><col class="w-[90px]"><col class="w-[179px]"><col class="w-[90px]"><col class="w-[180px]"><col class="w-[90px]"><col class="w-[180px]"><col class="w-[90px]"><col class="w-[181px]"></colgroup>
              <tr class="h-[10px]"><td></td><td></td><td rowspan="2"></td><td rowspan="2"></td><td rowspan="2"></td><td rowspan="2"></td><td rowspan="2"></td><td rowspan="2"></td></tr>
              <tr class="h-[23px]"><td colspan="2"><div class="flex items-center h-[23px]"><span class="ml-[7px] w-[5px] h-[15px] bg-[#2f86ee]"></span><span class="ml-[7px] pl-[1px] h-[23px] leading-[23px] border-l border-dashed border-[#d0d0d0] font-bold text-[#222222] whitespace-nowrap">服务记录与评价信息</span></div></td></tr>
            </table>
          </div>
          <div class="relative h-[49px] flex items-center pl-[13px] gap-[10px] pb-[1px] text-[#666666]">
            <div class="absolute left-0 top-0 w-[33px] h-[33px] bg-[#999999] [clip-path:polygon(0_0,100%_0,0_100%)]"></div>
            <svg class="absolute left-[3px] top-[2px] w-[16px] h-[10px]" viewBox="0 0 16 10" fill="#fff"><path d="M0 0h16v10H0z" fill="#999"/><path d="M1 1h4v3.500H1zM6 1h4v3.500H6zM11 1h4v3.500h-4zM1 5.500h4V9H1zM6 5.500h4V9H6zM11 5.500h4V9h-4z"/></svg>
            <div class="relative w-[70px] h-[31px] rounded-full border border-[#d8d8d8] flex items-center justify-center gap-[5px]"><svg class="w-[15px] h-[15px]"><use href="#i-plus"/></svg>新建</div>
            <div class="w-[70px] h-[31px] rounded-full border border-[#d8d8d8] flex items-center justify-center gap-[5px]"><svg class="w-[15px] h-[15px]"><use href="#i-copy"/></svg>复制</div>
            <div class="w-[70px] h-[31px] rounded-full border border-[#d8d8d8] flex items-center justify-center gap-[5px]"><svg class="w-[15px] h-[15px]"><use href="#i-trash"/></svg>删除</div>
            <div class="w-[98px] h-[31px] rounded-full border border-[#d8d8d8] flex items-center justify-center gap-[5px]"><svg class="w-[15px] h-[15px]"><use href="#i-trashall"/></svg>删除全部</div>
            <div class="w-[98px] h-[31px] rounded-full border border-[#d8d8d8] flex items-center justify-center gap-[5px]"><svg class="w-[15px] h-[15px]"><use href="#i-import"/></svg>导入数据</div>
            <div class="w-[98px] h-[31px] rounded-full border border-[#d8d8d8] flex items-center justify-center gap-[5px]"><svg class="w-[15px] h-[15px]"><use href="#i-export"/></svg>导出数据</div>
          </div>
          <table class="w-[1080px] table-fixed text-[#666666] [&_td]:border [&_td]:border-dashed [&_td]:border-[#d0d0d0]">
            <colgroup><col class="w-[26px]"><col class="w-[112px]"><col class="w-[316px]"><col class="w-[56px]"><col class="w-[148px]"><col class="w-[128px]"><col class="w-[294px]"></colgroup>
            <tr class="h-[26px] bg-[#f7f7f7] text-center">
              <td class="whitespace-nowrap text-[12px] text-[#999999]">表头</td>
              <td>事件编号</td>
              <td>事件名称</td>
              <td>评分</td>
              <td colspan="2">案件所属专业</td>
              <td>评价内容</td>
            </tr>
            <tr class="h-[63px]">
              <td class="pt-[3px]"><svg class="mx-auto w-[14px] h-[14px] text-[#7b9cf0]"><use href="#i-seq"/></svg></td>
              <td class="align-top"><div class="h-[46px] mx-[2px] border-b border-[#d8d8d8]"></div></td>
              <td class="align-top"><div class="h-[46px] mx-[2px] border-b border-[#d8d8d8]"></div></td>
              <td class="align-top"><div class="h-[46px] mx-[2px] border-b border-[#d8d8d8] flex items-end pb-[7px] text-[12px] text-[#cccccc]">1-...</div></td>
              <td class="align-top"><div class="h-[46px] mx-[2px] border-b border-[#d8d8d8] flex items-end justify-end pb-[10px] pr-[3px]"><svg class="w-[12px] h-[8px]"><use href="#i-arrow"/></svg></div></td>
              <td class="align-top"><div class="h-[46px] mx-[2px] border-b border-[#d8d8d8] flex items-end justify-end pb-[10px] pr-[3px]"><svg class="w-[12px] h-[8px]"><use href="#i-arrow"/></svg></div></td>
              <td class="align-top"><div class="h-[61px] mx-[2px] border-b border-[#d8d8d8]"></div></td>
            </tr>
          </table>
        </div>
      </div>

      <!-- sheet tabs -->
      <div class="h-[21px] shrink-0 flex bg-[#4d4d4d] text-white">
        <div class="ml-[1px] w-[18px] bg-[#555555] flex items-center justify-center"><svg class="w-[8px] h-[12px]" viewBox="0 0 8 12" fill="none" stroke="#777"><path d="M6.500 1 1.500 6l5 5"/></svg></div>
        <div class="w-[111px] bg-[#666666] text-center text-[12px] leading-[21px]">律师档案</div>
        <div class="w-[18px] flex items-center justify-center"><svg class="w-[11px] h-[11px]" viewBox="0 0 12 12" stroke="#fff" stroke-width="1.300"><path d="M6 0v12M0 6h12"/></svg></div>
      </div>
    </main>

    <!-- right: form properties -->
    <aside class="w-[236px] shrink-0 bg-white relative overflow-hidden">
      <div class="h-[31px] grid grid-cols-[118px_118px] border-b border-[#a5d3f8] text-center leading-[28px]">
        <span class="text-[#2f8cf0] border-b-2 border-[#2f8cf0] h-[30px]">表单属性</span>
        <span class="pr-[2px]">控件属性</span>
      </div>
      <div class="w-[229px]">
        <div class="h-[26px] bg-[#f3f3f3] pl-[10px] leading-[26px] text-[#aaaaaa]">基本设置</div>
        <div class="px-[10px]">
          <div class="mt-[19px] leading-[20px] flex"><span class="text-[#f56c6c] w-[9px]">*</span>表单名称</div>
          <div class="mt-[3px] h-[31px] rounded-[3px] border border-[#d0d0d0] px-[5px] leading-[29px]">律师档案</div>
          <div class="mt-[16px] leading-[20px]">所属应用</div>
          <div class="mt-[3px] h-[30px] rounded-[3px] border border-[#d0d0d0] px-[5px] leading-[28px]">律所管理</div>
          <div class="mt-[13px] leading-[20px]">表单分类</div>
          <div class="mt-[3px] h-[30px] rounded-[3px] border border-[#d0d0d0] pl-[5px] pr-[6px] flex items-center justify-between">法务合规管理<svg class="w-[12px] h-[8px]"><use href="#i-arrow"/></svg></div>
          <div class="mt-[13px] leading-[20px]">数据库主表名</div>
          <div class="mt-[3px] h-[31px] rounded-[3px] border border-[#d0d0d0] bg-[#f0f0f0] px-[5px] leading-[29px]">table_formmain_9397</div>
          <div class="mt-[22px] h-[35px] rounded-full border border-[#9fd0fb] text-[#2f8cf0] flex items-center justify-center gap-[4px]">表单样式设置<svg class="w-[15px] h-[11px]"><use href="#i-ok"/></svg></div>
        </div>
        <div class="mt-[7px] h-[26px] bg-[#f3f3f3] pl-[10px] leading-[26px] text-[#aaaaaa]">业务设置</div>
        <div class="px-[10px]">
          <div class="mt-[17px] h-[30px] rounded-full border border-[#9fd0fb] text-[#2f8cf0] flex items-center justify-center">校验规则</div>
          <div class="mt-[10px] h-[30px] rounded-full border border-[#9fd0fb] text-[#2f8cf0] flex items-center justify-center gap-[4px]">数据唯一<svg class="w-[15px] h-[11px]"><use href="#i-ok"/></svg></div>
          <div class="mt-[10px] h-[30px] rounded-full border border-[#9fd0fb] text-[#2f8cf0] flex items-center justify-center">高级</div>
          <div class="mt-[10px] h-[30px] rounded-full border border-[#9fd0fb] text-[#2f8cf0] flex items-center justify-center">条件视图</div>
        </div>
        <div class="mt-[15px] h-[26px] bg-[#f3f3f3] pl-[10px] leading-[26px] text-[#aaaaaa]">视图设置</div>
        <div class="px-[10px]">
          <div class="mt-[19px] leading-[20px] flex">当前视图:<span class="ml-[12px]">律师档案</span></div>
          <div class="mt-[19px] leading-[20px] flex"><span class="text-[#f56c6c] w-[9px]">*</span>视图宽度</div>
          <div class="mt-[3px] flex items-center">
            <div class="w-[140px] h-[30px] rounded-[3px] border border-[#d0d0d0] px-[5px] leading-[28px]">1080</div>
            <span class="ml-[4px]">像素</span>
            <svg class="ml-[9px] w-[15px] h-[15px]" viewBox="0 0 16 16" fill="none" stroke="#e8a25c"><circle cx="8" cy="8" r="7"/><path d="M8 4v1.500M8 7v5"/></svg>
          </div>
          <div class="mt-[13px] leading-[20px]">多明细表显示方式</div>
          <div class="mt-[3px] h-[30px] rounded-[3px] border border-[#d0d0d0] pl-[5px] pr-[6px] flex items-center justify-between">平铺<svg class="w-[12px] h-[8px]"><use href="#i-arrow"/></svg></div>
          <div class="mt-[13px] h-[14px] flex items-center"><span class="ml-[1px] w-[14px] h-[14px] rounded-[2px] border border-[#aaaaaa]"></span><span class="ml-[4px]">控件浏览态隐藏边框</span></div>
          <div class="mt-[12px] h-[35px] pb-[3px] rounded-full border border-[#9fd0fb] text-[#2f8cf0] flex items-center justify-center">表格隐藏设置</div>
        </div>
      </div>
      <span class="absolute left-[229px] top-[31px] bottom-[20px] w-[7px] bg-[#808080] rounded-b-[3px]"></span>
    </aside>
  </div>
</body>
</html>
